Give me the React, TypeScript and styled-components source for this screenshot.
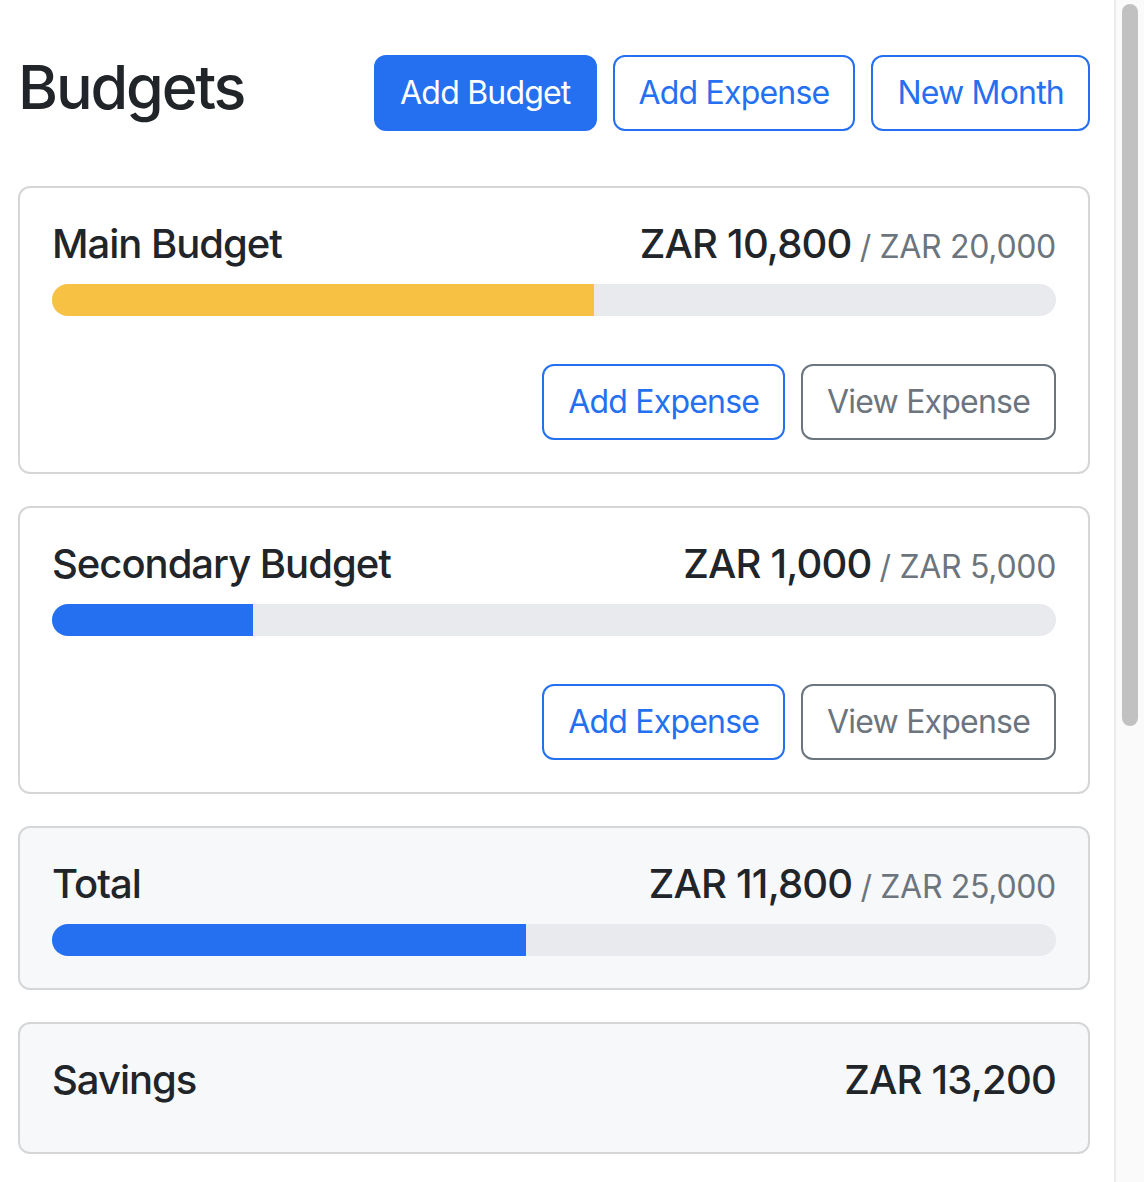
import React from "react";
import styled, { createGlobalStyle } from "styled-components";

const GlobalStyle = createGlobalStyle`
  html, body {
    margin: 0;
    padding: 0;
    background: #ffffff;
    overflow: hidden;
  }
  body {
    font-family: Inter, "Noto Sans", "Liberation Sans", sans-serif;
    color: #212529;
  }
  * {
    box-sizing: border-box;
  }
`;

type Budget = {
  name: string;
  spent: number;
  max: number;
};

const budgets: Budget[] = [
  { name: "Main Budget", spent: 10800, max: 20000 },
  { name: "Secondary Budget", spent: 1000, max: 5000 },
];

const fmt = (n: number) => "ZAR " + n.toLocaleString("en-US");

function barColor(ratio: number) {
  if (ratio < 0.5) return "#2470f0";
  if (ratio < 0.75) return "#f7c244";
  return "#dc3545";
}

function App() {
  const spent = budgets.reduce((s, b) => s + b.spent, 0);
  const max = budgets.reduce((s, b) => s + b.max, 0);
  return (
    <Shell>
      <GlobalStyle />
      <Page>
        <Header>
          <Title>Budgets</Title>
          <Button variant="primary">Add Budget</Button>
          <Button variant="outline-primary">Add Expense</Button>
          <Button variant="outline-primary">New Month</Button>
        </Header>
        <Stack>
          {budgets.map((b) => (
            <Card key={b.name}>
              <CardTitle>
                <Name>{b.name}</Name>
                <Amount>
                  {fmt(b.spent)}
                  <Muted>/ {fmt(b.max)}</Muted>
                </Amount>
              </CardTitle>
              <Progress>
                <Bar
                  color={barColor(b.spent / b.max)}
                  style={{ width: `${(b.spent / b.max) * 100}%` }}
                />
              </Progress>
              <Actions>
                <Button variant="outline-primary">Add Expense</Button>
                <Button variant="outline-secondary">View Expense</Button>
              </Actions>
            </Card>
          ))}
          <Card light>
            <CardTitle>
              <Name>Total</Name>
              <Amount>
                {fmt(spent)}
                <Muted>/ {fmt(max)}</Muted>
              </Amount>
            </CardTitle>
            <Progress>
              <Bar color="#2470f0" style={{ width: `${(spent / max) * 100}%` }} />
            </Progress>
          </Card>
          <Card light>
            <CardTitle>
              <Name>Savings</Name>
              <Amount>{fmt(max - spent)}</Amount>
            </CardTitle>
          </Card>
        </Stack>
      </Page>
      <ScrollRail>
        <Thumb />
      </ScrollRail>
    </Shell>
  );
}

export default App;

const Shell = styled.div`
  display: flex;
  height: 100vh;
  overflow: hidden;
`;

const Page = styled.main`
  flex: 1;
  padding: 55px 24px 0 18px;
`;

const ScrollRail = styled.div`
  width: 30px;
  flex-shrink: 0;
  background: #fafafa;
  border-left: 2px solid #ececec;
  padding: 4px 6px 0 6px;
`;

const Thumb = styled.div`
  width: 16px;
  height: 722px;
  border-radius: 8px;
  background: #c1c1c1;
`;

const Header = styled.div`
  display: flex;
  align-items: flex-start;
  gap: 16px;
  margin-bottom: 55px;
`;

const Title = styled.h1`
  margin: 2px auto 0 0;
  font-size: 61px;
  font-weight: 500;
  line-height: 1;
  letter-spacing: -0.035em;
`;

const Button = styled.button<{ variant: string }>`
  font-family: inherit;
  font-size: 32px;
  line-height: 48px;
  letter-spacing: -0.025em;
  padding: 12px 24px;
  border-radius: 12px;
  border: 2px solid
    ${(p) => (p.variant === "outline-secondary" ? "#6c757d" : "#2470f0")};
  background: ${(p) => (p.variant === "primary" ? "#2470f0" : "#ffffff")};
  color: ${(p) =>
    p.variant === "primary"
      ? "#ffffff"
      : p.variant === "outline-secondary"
      ? "#6c757d"
      : "#2470f0"};
  white-space: nowrap;
  cursor: pointer;
`;

const Stack = styled.div`
  display: flex;
  flex-direction: column;
  gap: 32px;
`;

const Card = styled.div<{ light?: boolean }>`
  border: 2px solid #d5d6d8;
  border-radius: 12px;
  padding: 32px;
  background: ${(p) => (p.light ? "#f7f8fa" : "#ffffff")};
`;

const CardTitle = styled.div`
  display: flex;
  justify-content: space-between;
  align-items: baseline;
  height: 48px;
  margin-bottom: 16px;
`;

const Name = styled.div`
  font-size: 40px;
  line-height: 48px;
  font-weight: 500;
  letter-spacing: -0.025em;
`;

const Amount = styled.div`
  font-size: 40px;
  line-height: 48px;
  font-weight: 500;
  letter-spacing: -0.02em;
`;

const Muted = styled.span`
  font-size: 32px;
  line-height: 1;
  color: #6c757d;
  font-weight: 400;
  letter-spacing: -0.01em;
  margin-left: 8px;
`;

const Progress = styled.div`
  height: 32px;
  border-radius: 16px;
  background: #e9eaed;
  overflow: hidden;
  display: flex;
`;

const Bar = styled.div<{ color: string }>`
  height: 100%;
  background: ${(p) => p.color};
`;

const Actions = styled.div`
  display: flex;
  justify-content: flex-end;
  gap: 16px;
  margin-top: 48px;
`;
